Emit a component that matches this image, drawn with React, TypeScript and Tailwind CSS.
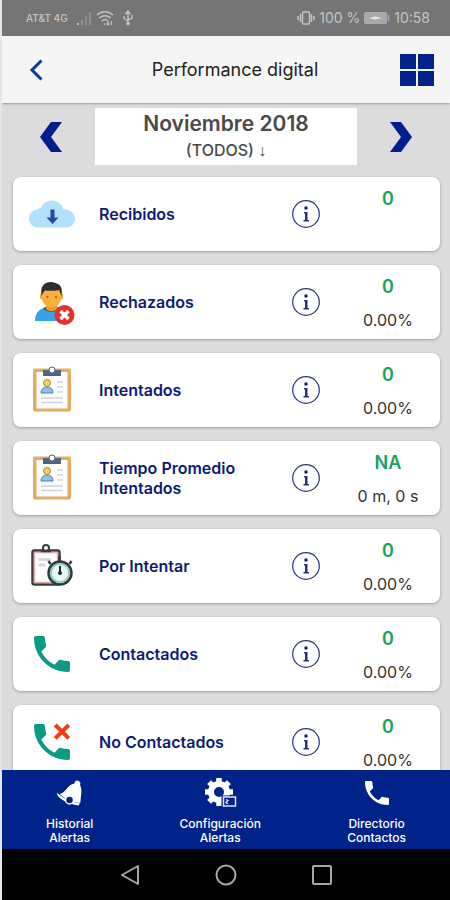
import React, { useState } from 'react';

const MONTHS = ['Octubre 2018', 'Noviembre 2018', 'Diciembre 2018'];

const PHONE_PATH =
  'M6.62 10.79c1.44 2.83 3.76 5.14 6.59 6.59l2.2-2.2c.27-.27.67-.36 1.02-.24 1.12.37 2.33.57 3.57.57.55 0 1 .45 1 1V20c0 .55-.45 1-1 1-9.39 0-17-7.61-17-17 0-.55.45-1 1-1h3.5c.55 0 1 .45 1 1 0 1.25.2 2.45.57 3.57.11.35.03.74-.25 1.02l-2.2 2.2z';

function CloudIcon() {
  return (
    <svg viewBox="0 0 48 48" className="h-12 w-12">
      <path
        d="M10 37.500a9 9 0 0 1-.5-18 4 4 0 0 1 3.500-1.500C14.500 13 19 10.500 24 10.500c5.500 0 10 3.500 11.500 9C42 19 47 23 47 28.500c0 5-4 9-9 9z"
        fill="#b3e1fb"
      />
      <path d="M22.500 19.500h4v8h4L24.500 34l-6-6.500h4z" fill="#2748a8" />
    </svg>
  );
}

function RejectedIcon() {
  return (
    <svg viewBox="0 0 48 48" className="h-12 w-12">
      <path d="M7 43c0-8 4-12 10-13h13c6 1 9 5 9 13z" fill="#36a3e8" />
      <path d="M15 30c3 5 14 5 17 0l-3-1H18z" fill="#24557a" />
      <path d="M18 24h11v7c-3 3-8 3-11 0z" fill="#f09a1e" />
      <ellipse cx="13.500" cy="18.500" rx="1.500" ry="3" fill="#f4a62a" />
      <ellipse cx="33.500" cy="18.500" rx="1.500" ry="3" fill="#f4a62a" />
      <path d="M14 12h19v9c0 4-5 8.500-9.500 8.500S14 25 14 21z" fill="#fbb03b" />
      <path d="M13.500 18c-1.500-9 2-14 9.500-14 3 0 5 1 6.500 2 4 1 5 6 4 12-1-2-1.500-4-2.500-6-5 1-10 1-14 .5-1.500 1.500-2.500 3-3.500 5.500z" fill="#2e2e30" />
      <circle cx="19.500" cy="19" r="1" fill="#8a5a1c" />
      <circle cx="28" cy="19" r="1" fill="#8a5a1c" />
      <circle cx="36.500" cy="37" r="10" fill="#e5322d" />
      <path d="M32.500 33l8 8m0-8l-8 8" stroke="#fff" strokeWidth="3.500" />
    </svg>
  );
}

function ClipboardIcon() {
  return (
    <svg viewBox="0 0 48 48" className="h-12 w-12">
      <rect x="5" y="2.500" width="38" height="43" rx="2" fill="#e3ad62" />
      <rect x="8.500" y="6" width="31" height="36.500" fill="#fff" />
      <path d="M15 4h5.500a4 4 0 0 1 7 0H33v6H15z" fill="#53657d" />
      <circle cx="24" cy="4" r="3" fill="#fff" stroke="#53657d" />
      <path d="M13 27c0-4 2.500-6 6-6s6 2 6 6z" fill="#8fc0ea" stroke="#4d7fae" />
      <circle cx="19" cy="17" r="3.500" fill="#f7d45c" stroke="#a8873c" />
      <path d="M29 16h6M29 21h6M29 26h6M13 32h22M13 36.500h22" stroke="#cfd4da" strokeWidth="1.500" />
    </svg>
  );
}

function PendingIcon() {
  return (
    <svg viewBox="0 0 48 48" className="h-12 w-12">
      <rect x="4.500" y="8.500" width="27" height="34" rx="2" fill="#fff" stroke="#3a3a3f" strokeWidth="2.500" />
      <rect x="6.500" y="10.500" width="23" height="30" fill="#fff" stroke="#e7a9ab" strokeWidth="1.500" />
      <circle cx="18" cy="6" r="3" fill="#fff" stroke="#3a3a3f" strokeWidth="2" />
      <path d="M13 9h10" stroke="#3a3a3f" strokeWidth="2.500" />
      <path d="M10.500 17.500h12M10.500 23h7" stroke="#d8d8e2" strokeWidth="3" />
      <path d="M31.500 14v6M22.500 22l-2-3M41.500 22l2-3" stroke="#3a3a3f" strokeWidth="2.500" />
      <circle cx="32" cy="31" r="11.500" fill="#8fd3c3" stroke="#34383c" strokeWidth="2.500" />
      <circle cx="32" cy="31" r="8" fill="#eaf7f4" />
      <path d="M32 24v7" stroke="#25282c" strokeWidth="2" />
      <circle cx="32" cy="31" r="2" fill="#25282c" />
    </svg>
  );
}

function PhoneIcon() {
  return (
    <svg viewBox="0 0 24 24" className="h-12 w-12">
      <path d={PHONE_PATH} fill="#0b9a82" />
    </svg>
  );
}

function MissedPhoneIcon() {
  return (
    <svg viewBox="0 0 24 24" className="h-12 w-12">
      <path d={PHONE_PATH} fill="#0b9a82" />
      <path d="M13.600 3.500l6.800 6.700m0-6.700l-6.800 6.700" stroke="#f23c14" strokeWidth="2" />
    </svg>
  );
}

function InfoIcon() {
  return (
    <svg viewBox="0 0 28 28" className="h-7 w-7">
      <circle cx="14" cy="14" r="13.300" fill="none" stroke="#27357f" strokeWidth="1.200" />
      <rect x="12.500" y="6.500" width="3" height="3" fill="#111c78" />
      <path d="M12 12h3.500v8H17v1.500h-5.500V20H13v-6.500h-1z" fill="#27357f" />
    </svg>
  );
}

const metrics = [
  { label: 'Recibidos', value: '0', detail: '', icon: CloudIcon },
  { label: 'Rechazados', value: '0', detail: '0.00%', icon: RejectedIcon },
  { label: 'Intentados', value: '0', detail: '0.00%', icon: ClipboardIcon },
  { label: 'Tiempo Promedio Intentados', value: 'NA', detail: '0 m, 0 s', icon: ClipboardIcon },
  { label: 'Por Intentar', value: '0', detail: '0.00%', icon: PendingIcon },
  { label: 'Contactados', value: '0', detail: '0.00%', icon: PhoneIcon },
  { label: 'No Contactados', value: '0', detail: '0.00%', icon: MissedPhoneIcon },
];

function StatusBar() {
  return (
    <div className="flex h-9 shrink-0 items-center justify-between bg-[#757575] pr-5 pl-6 text-[#c4c4c4]">
      <div className="flex items-center gap-1">
        <span className="mr-1 text-[10px] font-medium">AT&amp;T 4G</span>
        <svg viewBox="0 0 16 14" className="h-4 w-4">
          <path d="M1 14v-2h2v2z" fill="#c4c4c4" />
          <path d="M5 14v-5h2v5zM9 14V5h2v9zM13 14V1h2v13z" fill="#8f8f8f" />
        </svg>
        <svg viewBox="0 0 18 16" className="h-4 w-[18px]" fill="none" stroke="#c4c4c4" strokeWidth="1.500">
          <path d="M1 5c4.500-4.500 11.500-4.500 16 0M3.500 8c3-3 8-3 11 0M6 11c2-2 4-2 6 0" />
          <path d="M8 13.500l1 1M12 11v4m-1.500-1.500L12 15l1.500-1.500M15.500 15v-4" strokeWidth="1.200" />
        </svg>
        <svg viewBox="0 0 12 16" className="ml-1 h-4 w-3" fill="none" stroke="#c4c4c4" strokeWidth="1.300">
          <path d="M6 2v11M6 11L2 8.500V6M6 10l4-2V5" />
          <path d="M4 3.500L6 1l2 2.500z" fill="#c4c4c4" />
          <circle cx="6" cy="13.500" r="1.200" fill="#c4c4c4" />
        </svg>
      </div>
      <div className="flex items-center gap-1 text-sm">
        <svg viewBox="0 0 18 14" className="h-4 w-[18px]" fill="none" stroke="#c4c4c4" strokeWidth="1.500">
          <rect x="5.500" y="1" width="7" height="12" rx="1" />
          <path d="M3.500 3v8M1 5v4M14.500 3v8M17 5v4" />
        </svg>
        <span>100 %</span>
        <svg viewBox="0 0 26 12" className="h-3 w-[26px]">
          <rect width="23" height="12" rx="2" fill="#a9a9a9" />
          <path d="M24.500 3v6" stroke="#a9a9a9" strokeWidth="1.500" />
          <path d="M5 6l6-1.500 7 1.500-7 1.500z" fill="#e6e6e6" />
        </svg>
        <span>10:58</span>
      </div>
    </div>
  );
}

export default function App() {
  const [month, setMonth] = useState(1);

  return (
    <div className="flex h-screen flex-col overflow-hidden border-l-2 border-[#e6e6e6] bg-[#dcdcdc] font-['Inter','Liberation_Sans',sans-serif]">
      <StatusBar />

      {/* Title bar */}
      <header className="z-10 flex h-[67px] shrink-0 items-center justify-between bg-[#f5f5f5] pr-4 pl-6 shadow-[0_1px_2px_rgba(0,0,0,0.3)]">
        <button aria-label="Volver" className="flex w-11 items-center">
          <svg viewBox="0 0 20 22" className="h-[22px] w-5" fill="none" stroke="#0b3a9b" strokeWidth="3">
            <path d="M15.500 1.500L6 11l9.500 9.500" />
          </svg>
        </button>
        <h1 className="text-lg text-[#222]">Performance digital</h1>
        <button aria-label="Menú">
          <svg viewBox="0 0 34 32" className="h-8 w-[34px]" fill="#00238a">
            <path d="M0 0h16v15H0zM18 0h16v15H18zM0 17h16v15H0zM18 17h16v15H18z" />
          </svg>
        </button>
      </header>

      {/* Month picker */}
      <div className="flex shrink-0 items-center justify-between px-[38px] pt-[5px]">
        <button aria-label="Mes anterior" onClick={() => setMonth(Math.max(0, month - 1))}>
          <svg viewBox="0 0 22 30" className="h-[30px] w-[22px]" fill="#001f8f">
            <path d="M11 0h11L11 15l11 15H11L0 15z" />
          </svg>
        </button>
        <button className="flex h-[57px] w-[262px] flex-col items-center justify-center bg-white text-[#4a4a4a]">
          <span className="text-[21px] leading-7 font-semibold">{MONTHS[month]}</span>
          <span className="text-base leading-6 font-medium">
            (TODOS) <span className="font-['Liberation_Sans',sans-serif]">↓</span>
          </span>
        </button>
        <button aria-label="Mes siguiente" onClick={() => setMonth(Math.min(2, month + 1))}>
          <svg viewBox="0 0 22 30" className="h-[30px] w-[22px]" fill="#001f8f">
            <path d="M11 0H0l11 15L0 30h11l11-15z" />
          </svg>
        </button>
      </div>

      {/* Metrics */}
      <main className="min-h-0 flex-1 overflow-y-auto pt-3 [scrollbar-width:none]">
        <ul className="flex flex-col gap-[14px] pr-[10px] pb-4 pl-[11px]">
          {metrics.map((metric) => (
            <li
              key={metric.label}
              className="flex h-[74px] items-center rounded-lg bg-white shadow-[0_1px_3px_rgba(0,0,0,0.3)]"
            >
              <div className="flex w-[78px] shrink-0 justify-center">
                <metric.icon />
              </div>
              <h2 className="flex-1 pr-8 pl-2 text-base leading-5 font-semibold text-[#0c1c74]">{metric.label}</h2>
              <button aria-label={`Información de ${metric.label}`} className="shrink-0">
                <InfoIcon />
              </button>
              <div className="ml-4 flex h-full w-[104px] shrink-0 flex-col items-center pt-2">
                <span className="text-lg leading-7 font-semibold text-[#16a35c]">{metric.value}</span>
                <span className="mt-[7px] text-base leading-6 text-[#333]">{metric.detail}</span>
              </div>
            </li>
          ))}
        </ul>
      </main>

      {/* Bottom menu */}
      <nav className="z-10 flex h-[79px] shrink-0 justify-between bg-[#00238a] px-11 pt-[7px] text-center text-xs leading-[14px] font-medium text-white">
        <a href="#historial" className="flex flex-col items-center gap-2">
          <svg viewBox="0 0 32 32" className="h-8 w-8" fill="#fff">
            <path d="M20.500 6.500c.2-2 1.500-3.300 3.500-2.800 2.300.6 3 2.500 2 4.300 1.800 3 1.500 7 1 10.500-.3 2.800-.3 5-.8 7.500l-3.200-.5c-6-1-12-3.500-17.500-8.500 3-.8 5-2.500 7-5 2.300-3 4.500-5 8-5.500z" />
            <path d="M3 15.500c6 6 14 9.500 22.500 10.500l-.5 2.500C16 27.500 8 24 3.500 18.500z" />
            <circle cx="15.500" cy="23" r="4" fill="#00238a" stroke="#fff" strokeWidth="1.500" />
          </svg>
          <span>Historial<br />Alertas</span>
        </a>
        <a href="#configuracion" className="flex flex-col items-center gap-2">
          <svg viewBox="0 0 34 32" className="h-8 w-[34px]">
            <circle cx="16" cy="15" r="8" fill="none" stroke="#fff" strokeWidth="6" />
            <path
              d="M16 1v5M16 24v5M2 15h5M25 15h5M6.100 5.100l3.600 3.600M25.900 5.100l-3.600 3.600M6.100 24.900l3.600-3.600"
              stroke="#fff"
              strokeWidth="5.500"
            />
            <rect x="18.500" y="18.500" width="15" height="12" fill="#00238a" />
            <rect x="20.500" y="20" width="12" height="9" fill="none" stroke="#dfe4f3" strokeWidth="1.500" />
            <path d="M23 22.500l2 1-2 2 2 1.500" fill="none" stroke="#dfe4f3" strokeWidth="1.300" />
          </svg>
          <span>Configuración<br />Alertas</span>
        </a>
        <a href="#directorio" className="flex flex-col items-center gap-2">
          <svg viewBox="0 0 24 24" className="h-8 w-8" fill="#fff">
            <path d={PHONE_PATH} />
          </svg>
          <span>Directorio<br />Contactos</span>
        </a>
      </nav>

      {/* System navigation */}
      <div className="flex h-[51px] shrink-0 items-center justify-center gap-[74px] bg-black">
        <button aria-label="Atrás">
          <svg viewBox="0 0 22 22" className="h-[22px] w-[22px]" fill="none" stroke="#a6a6a6" strokeWidth="2" strokeLinejoin="round">
            <path d="M19 2v18L3 11z" />
          </svg>
        </button>
        <button aria-label="Inicio">
          <svg viewBox="0 0 22 22" className="h-[22px] w-[22px]" fill="none" stroke="#a6a6a6" strokeWidth="2">
            <circle cx="11" cy="11" r="9.500" />
          </svg>
        </button>
        <button aria-label="Recientes">
          <svg viewBox="0 0 22 22" className="h-[22px] w-[22px]" fill="none" stroke="#a6a6a6" strokeWidth="2">
            <rect x="2" y="2" width="18" height="18" rx="1" />
          </svg>
        </button>
      </div>
    </div>
  );
}
